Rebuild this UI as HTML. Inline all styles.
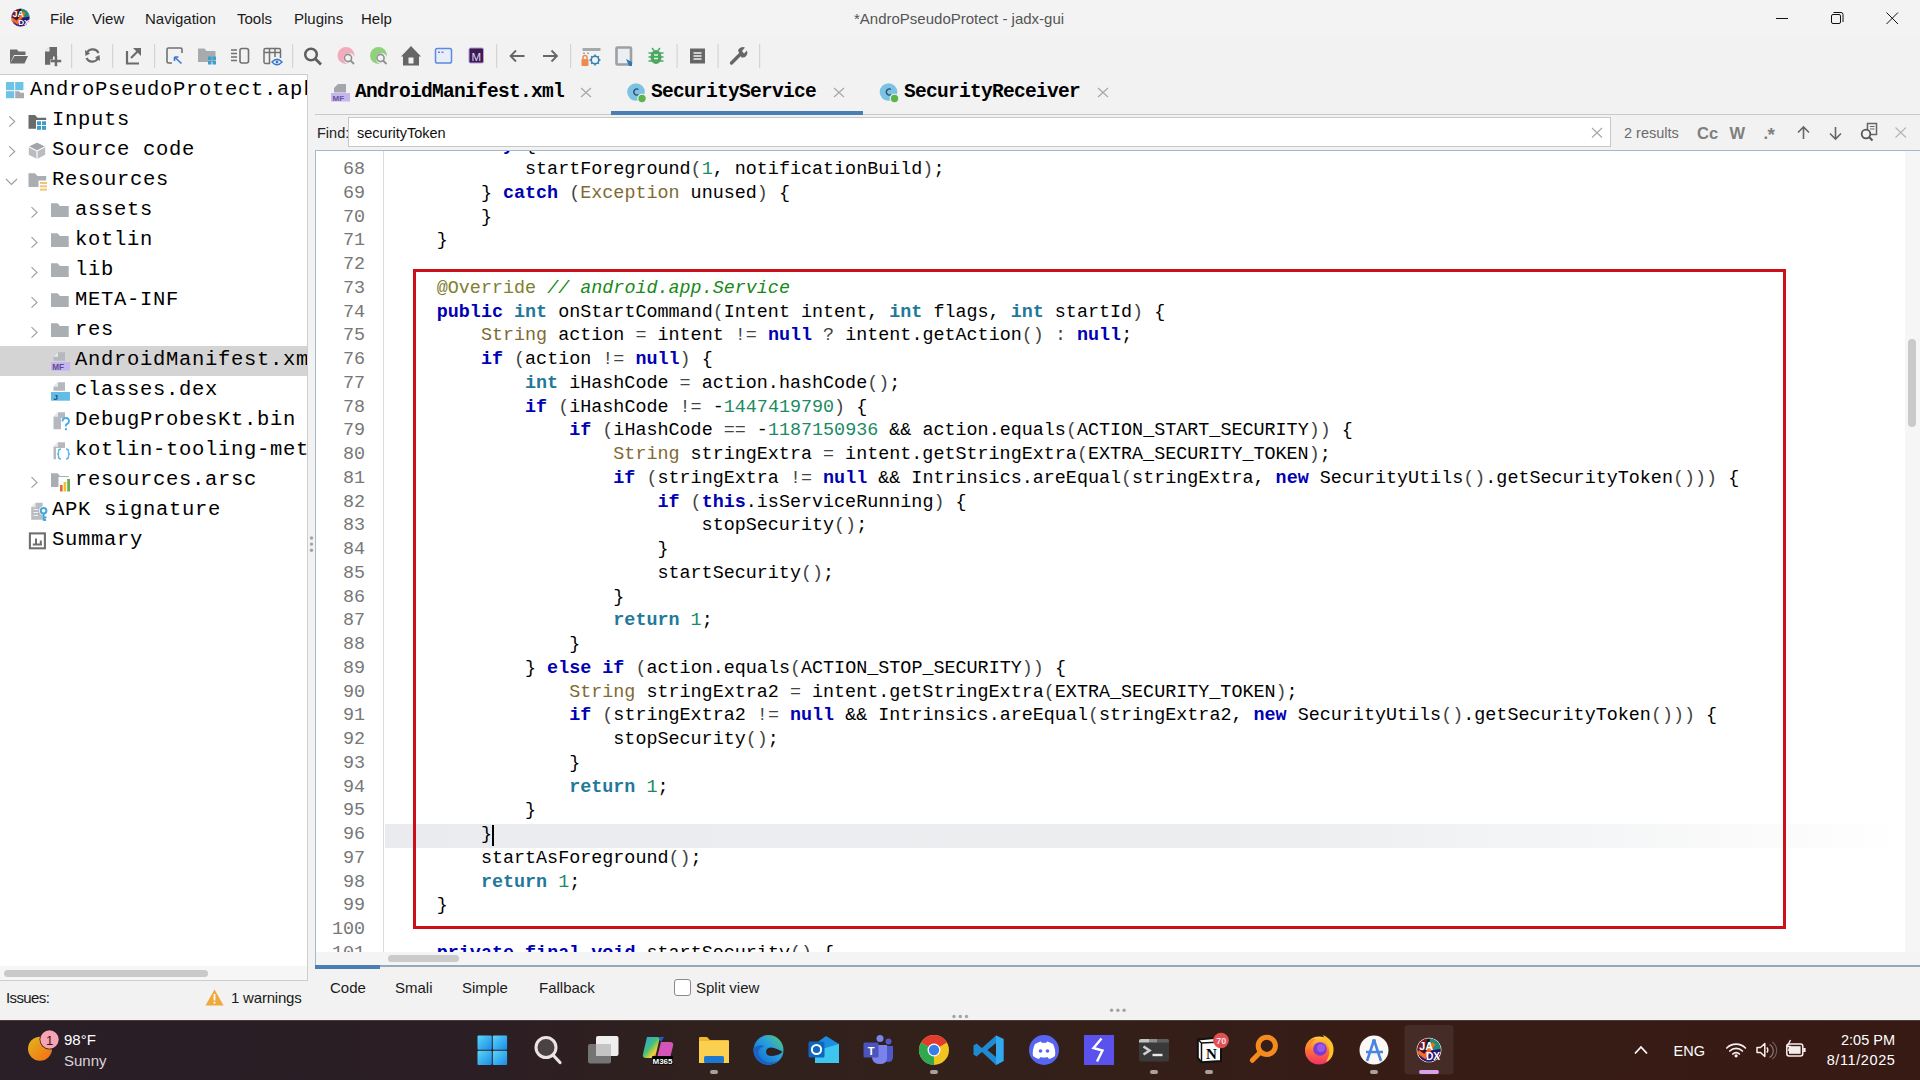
<!DOCTYPE html>
<html><head><meta charset="utf-8">
<style>
*{margin:0;padding:0;box-sizing:border-box}
html,body{width:1920px;height:1080px;overflow:hidden;background:#f2f2f2;font-family:"Liberation Sans",sans-serif;position:relative}
.abs{position:absolute}
svg{position:absolute;overflow:visible}
.ui{position:absolute;font-family:"Liberation Sans",sans-serif;font-size:15px;line-height:18px;color:#1a1a1a;white-space:nowrap}
#titlebar{left:0;top:0;width:1920px;height:36px;background:#f3f3f3}
#toolbar{left:0;top:36px;width:1920px;height:40px;background:#f2f2f2}
.sep{position:absolute;top:44px;width:1px;height:24px;background:#d6d6d6}
#tree{left:0;top:74px;width:308px;height:907px;background:#fff;border:1px solid #cdcdcd;border-left:none;overflow:hidden}
.trow{position:absolute;height:30px;font-family:"Liberation Mono",monospace;font-size:20.5px;letter-spacing:0.7px;line-height:30px;color:#000;white-space:pre}
.tab{position:absolute;font-family:"Liberation Mono",monospace;font-weight:bold;font-size:19.5px;letter-spacing:-0.7px;line-height:26px;color:#000;white-space:pre}
#code{left:315px;top:150px;width:1605px;height:816px;background:#fff;border-top:1px solid #a3b9c9;border-left:1px solid #a3b9c9;overflow:hidden}
.ln{position:absolute;left:0;width:49px;height:23.75px;line-height:23.75px;text-align:right;font-family:"Liberation Mono",monospace;font-size:18.407px;color:#777;white-space:pre}
.cl{position:absolute;left:76.6px;height:23.75px;line-height:23.75px;font-family:"Liberation Mono",monospace;font-size:18.407px;color:#000;white-space:pre}
.k{color:#0000b4;font-weight:bold}
.t{color:#21789a;font-weight:bold}
.c{color:#806a32}
.n{color:#1b8a64}
.a{color:#808030}
.cm{color:#178a17;font-style:italic}
.o{color:#444}
#taskbar{left:0;top:1020px;width:1920px;height:60px;background:linear-gradient(90deg,#2a1f27 0%,#2b1e25 23%,#30211d 37%,#33201a 52%,#371c16 70%,#381a14 100%);border-top:1px solid #4a3c3c}
.tw{position:absolute;font-family:"Liberation Sans",sans-serif;color:#fff;white-space:nowrap}
</style></head>
<body>
<!-- TITLE BAR -->
<div id="titlebar" class="abs">
  <svg style="left:10.5px;top:8px" width="19" height="19" viewBox="0 0 20 20">
    <defs><clipPath id="lc"><circle cx="10" cy="10" r="9.6"/></clipPath></defs>
    <g clip-path="url(#lc)">
      <rect x="0" y="0" width="20" height="20" fill="#14121c"/>
      <path d="M11 0 L20 0 L20 11 L9 11 Z" fill="#1f8c7a"/>
      <path d="M0 12.5 L20 9 L20 20 L0 20 Z" fill="#2a1478"/>
      <path d="M0 0 L9 0 L6 11 L0 11 Z" fill="#7a1826"/>
    </g>
    <path d="M0.8 11.5 L6.5 15.5 L14 4.5" stroke="#f26a24" stroke-width="3.2" fill="none"/>
    <text x="1.8" y="9.6" font-family="Liberation Sans" font-weight="bold" font-size="9" fill="#fff">JA</text>
    <text x="7.5" y="18.2" font-family="Liberation Sans" font-weight="bold" font-size="8.5" fill="#fff">DX</text>
    <circle cx="10" cy="10" r="9.6" fill="none" stroke="#fff" stroke-width="0.6" opacity="0.6"/>
  </svg>
  <div class="ui" style="left:50px;top:10px">File</div>
  <div class="ui" style="left:92px;top:10px">View</div>
  <div class="ui" style="left:145px;top:10px">Navigation</div>
  <div class="ui" style="left:237px;top:10px">Tools</div>
  <div class="ui" style="left:294px;top:10px">Plugins</div>
  <div class="ui" style="left:361px;top:10px">Help</div>
  <div class="ui" style="left:854px;top:10px;color:#555">*AndroPseudoProtect - jadx-gui</div>
  <svg style="left:1776px;top:12px" width="13" height="13" viewBox="0 0 13 13"><path d="M0 6.5 H12" stroke="#111" stroke-width="1"/></svg>
  <svg style="left:1831px;top:12px" width="13" height="13" viewBox="0 0 13 13"><rect x="0.5" y="2.5" width="9" height="9" rx="1.5" fill="none" stroke="#111" stroke-width="1"/><path d="M2.5 0.5 H10 A2 2 0 0 1 12 2.5 V10" fill="none" stroke="#111" stroke-width="1"/></svg>
  <svg style="left:1886px;top:12px" width="13" height="13" viewBox="0 0 13 13"><path d="M0.5 0.5 L12 12 M12 0.5 L0.5 12" stroke="#111" stroke-width="1"/></svg>
</div>
<!-- TOOLBAR -->
<div id="toolbar" class="abs"></div>
<svg style="left:0;top:0" width="800" height="76" viewBox="0 0 800 76">
  <g fill="#6b6b6b">
    <!-- open folder -->
    <path d="M10 49.5 H17 L18.5 51.5 H25.5 V55 H14 L10 63.5 Z"/>
    <path d="M14.5 56 H28 L24.5 63.5 H10 Z"/>
    <!-- add file -->
    <path d="M49.5 47 H57 V56.5 H53 V59.5 H50.3 V64.8 H45 V51.5 Z"/>
    <path d="M45 51.5 L49.5 47 V51.5 Z" fill="#f2f2f2"/>
    <rect x="54.7" y="55.8" width="2.5" height="10.4"/>
    <rect x="50.7" y="59.8" width="10.5" height="2.5"/>
  </g>
  <rect x="71" y="44" width="1.2" height="24" fill="#d4d4d4"/>
  <rect x="112" y="44" width="1.2" height="24" fill="#d4d4d4"/>
  <rect x="154" y="44" width="1.2" height="24" fill="#d4d4d4"/>
  <rect x="292" y="44" width="1.2" height="24" fill="#d4d4d4"/>
  <rect x="496" y="44" width="1.2" height="24" fill="#d4d4d4"/>
  <rect x="570" y="44" width="1.2" height="24" fill="#d4d4d4"/>
  <rect x="676.5" y="44" width="1.2" height="24" fill="#d4d4d4"/>
  <rect x="717.5" y="44" width="1.2" height="24" fill="#d4d4d4"/>
  <rect x="759" y="44" width="1.2" height="24" fill="#d4d4d4"/>
  <!-- refresh -->
  <g fill="none" stroke="#6b6b6b" stroke-width="2.2">
    <path d="M98.5 53 A6.5 6.5 0 0 0 86.5 54"/>
    <path d="M86.5 58 A6.5 6.5 0 0 0 98.5 57"/>
  </g>
  <path d="M85 50 L85.5 56 L90 53.5 Z" fill="#6b6b6b"/>
  <path d="M100 61 L99.5 55 L95 57.5 Z" fill="#6b6b6b"/>
  <!-- export -->
  <path d="M127 51 V63.5 H139" fill="none" stroke="#6b6b6b" stroke-width="2.2"/>
  <path d="M131 58 L138 51" stroke="#6b6b6b" stroke-width="2.2"/>
  <path d="M133 48 H141 V56 Z" fill="#6b6b6b"/>
  <!-- select -->
  <path d="M172 63 H168.5 A1.5 1.5 0 0 1 167 61.5 V49.5 A1.5 1.5 0 0 1 168.5 48 H180.5 A1.5 1.5 0 0 1 182 49.5 V53" fill="none" stroke="#707070" stroke-width="1.6"/>
  <path d="M174.5 57 L181.5 63.5 M174.5 57 H178.5 M174.5 57 V61" fill="none" stroke="#3b78d0" stroke-width="1.6"/>
  <!-- folder grid -->
  <path d="M198 48.5 H204.5 L206.5 51 H215.5 V62 H198 Z" fill="#a7abae"/>
  <g fill="#3aa0cf">
    <rect x="208" y="56.5" width="3.5" height="3.5"/><rect x="212.5" y="56.5" width="3.5" height="3.5"/>
    <rect x="208" y="61" width="3.5" height="3.5"/><rect x="212.5" y="61" width="3.5" height="3.5"/>
  </g>
  <!-- list box -->
  <g stroke="#707070" stroke-width="1.6" fill="none">
    <path d="M231 50 H237 M231 53.5 H237 M231 57 H237 M231 60.5 H237"/>
    <rect x="240" y="48.5" width="8.5" height="14.5" rx="2"/>
  </g>
  <!-- table eye -->
  <g stroke="#707070" stroke-width="1.5" fill="none">
    <path d="M270 63.5 H265.5 A1.5 1.5 0 0 1 264 62 V50 A1.5 1.5 0 0 1 265.5 48.5 H279 A1.5 1.5 0 0 1 280.5 50 V58"/>
    <path d="M264 52.5 H280.5 M269.5 48.5 V63.5 M275 48.5 V57"/>
  </g>
  <path d="M272 62 Q277 56.5 282 62 Q277 67.5 272 62 Z" fill="#eef2fa" stroke="#3b78d0" stroke-width="1.4"/>
  <circle cx="277" cy="62" r="1.4" fill="#3b78d0"/>
  <!-- search -->
  <circle cx="311" cy="54.5" r="5.8" fill="none" stroke="#5e5e5e" stroke-width="2.5"/>
  <path d="M315.5 59 L321 64.5" stroke="#5e5e5e" stroke-width="2.8"/>
  <!-- pink search -->
  <circle cx="346" cy="55.5" r="8.5" fill="#f2aabc"/>
  <circle cx="349" cy="58.5" r="5.5" fill="#f2f2f2"/>
  <circle cx="348" cy="58" r="3.6" fill="none" stroke="#8f8f8f" stroke-width="1.6"/>
  <path d="M350.5 60.5 L354 64" stroke="#8f8f8f" stroke-width="1.8"/>
  <!-- green search -->
  <circle cx="378.5" cy="55.5" r="8.5" fill="#90d27c"/>
  <circle cx="381.5" cy="58.5" r="5.5" fill="#f2f2f2"/>
  <circle cx="380.5" cy="58" r="3.6" fill="none" stroke="#8f8f8f" stroke-width="1.6"/>
  <path d="M383 60.5 L386.5 64" stroke="#8f8f8f" stroke-width="1.8"/>
  <!-- home -->
  <path d="M411 46 L421 56.5 H419 V65.5 H403 V56.5 H401 Z" fill="#666"/>
  <rect x="408.5" y="57.5" width="5" height="6" fill="#f2f2f2"/>
  <!-- window -->
  <rect x="435.5" y="48.5" width="16" height="14.5" rx="1.8" fill="#e9edf9" stroke="#5a8be0" stroke-width="1.5"/>
  <rect x="438" y="51.5" width="2" height="1.5" fill="#5a8be0"/><rect x="441.5" y="51.5" width="2" height="1.5" fill="#5a8be0"/>
  <!-- M -->
  <rect x="469" y="48" width="14.5" height="15" rx="1.5" fill="#3b1d52" stroke="#b99ae0" stroke-width="1"/>
  <text x="476.2" y="60.5" text-anchor="middle" font-family="Liberation Sans" font-size="11.5" fill="#e0d0f0">M</text>
  <!-- arrows -->
  <g stroke="#666" stroke-width="1.8" fill="none">
    <path d="M524.5 56 H510.5 M516 50.5 L510.5 56 L516 61.5"/>
    <path d="M543 56 H557 M551.5 50.5 L557 56 L551.5 61.5"/>
  </g>
  <!-- lock gear -->
  <rect x="582.5" y="48" width="18" height="3" fill="#a5a9ac"/>
  <path d="M583 52.5 H585 V54 H583 Z M587 52.5 H589 V54 H587 Z" fill="#a5a9ac"/>
  <rect x="581.5" y="59" width="7" height="7" rx="1" fill="#ef8a4e"/>
  <path d="M583 59.5 V57.5 A2 2 0 0 1 587 57.5 V59.5" fill="none" stroke="#ef8a4e" stroke-width="1.5"/>
  <circle cx="595" cy="60" r="3.8" fill="#e9f4fb" stroke="#3a7fb0" stroke-width="1.6"/>
  <g stroke="#3a7fb0" stroke-width="1.6"><path d="M595 54.5 V56 M595 64 V65.5 M589.5 60 H591 M599 60 H600.5 M591.2 56.2 L592.2 57.2 M597.8 62.8 L598.8 63.8 M598.8 56.2 L597.8 57.2 M592.2 62.8 L591.2 63.8"/></g>
  <!-- device -->
  <rect x="616.5" y="47.5" width="14.5" height="17" rx="1" fill="#eceff2" stroke="#9aa0a4" stroke-width="2.6"/>
  <path d="M626 59 L632 62 L632 66 L629 66 Z" fill="#2e7ab3"/>
  <!-- bug -->
  <g fill="#4aa862">
    <ellipse cx="656" cy="57" rx="5.5" ry="7"/>
    <path d="M652 48 L654 50.5 M660 48 L658 50.5" stroke="#4aa862" stroke-width="1.5"/>
    <path d="M648.5 53 H663.5 M648.5 57 H663.5 M648.5 61 H663.5" stroke="#4aa862" stroke-width="1.6"/>
  </g>
  <path d="M654 55 H658 M654 58.5 H658" stroke="#e8f4ec" stroke-width="1.3"/>
  <!-- doc -->
  <rect x="690" y="48.5" width="15" height="15" fill="#666"/>
  <path d="M693.5 53 H701.5 M693.5 56 H701.5 M693.5 59 H701.5" stroke="#f2f2f2" stroke-width="1.3"/>
  <!-- wrench -->
  <path d="M731.5 63 L740.5 54" stroke="#666" stroke-width="3.4" stroke-linecap="round"/>
  <path d="M738 50.5 A5 5 0 0 1 745 47.5 L742 51 L744 53.5 L747 50.5 A5 5 0 0 1 741.5 57.5 Z" fill="#666"/>
</svg>
<!-- TREE -->
<div id="tree" class="abs">
  <div class="abs" style="left:0;top:271px;width:307px;height:30px;background:#d4d4d4"></div>
  <div class="trow" style="left:30px;top:-0.5px">AndroPseudoProtect.apk</div>
  <div class="trow" style="left:52px;top:29.5px">Inputs</div>
  <div class="trow" style="left:52px;top:59.5px">Source code</div>
  <div class="trow" style="left:52px;top:89.5px">Resources</div>
  <div class="trow" style="left:75px;top:119.5px">assets</div>
  <div class="trow" style="left:75px;top:149.5px">kotlin</div>
  <div class="trow" style="left:75px;top:179.5px">lib</div>
  <div class="trow" style="left:75px;top:209.5px">META-INF</div>
  <div class="trow" style="left:75px;top:239.5px">res</div>
  <div class="trow" style="left:75px;top:269.5px">AndroidManifest.xml</div>
  <div class="trow" style="left:75px;top:299.5px">classes.dex</div>
  <div class="trow" style="left:75px;top:329.5px">DebugProbesKt.bin</div>
  <div class="trow" style="left:75px;top:359.5px">kotlin-tooling-metadata.json</div>
  <div class="trow" style="left:75px;top:389.5px">resources.arsc</div>
  <div class="trow" style="left:52px;top:419.5px">APK signature</div>
  <div class="trow" style="left:52px;top:449.5px">Summary</div>
  <!-- scrollbar -->
  <div class="abs" style="left:0;top:891px;width:307px;height:15px;background:#f6f6f6"></div>
  <div class="abs" style="left:4px;top:895px;width:204px;height:7px;border-radius:4px;background:#c9c9c9"></div>
</div>
<svg style="left:0;top:0" width="310" height="560" viewBox="0 0 310 560">
  <g fill="#6dc3e3"><rect x="6" y="82" width="8.2" height="8.2"/><rect x="15.2" y="82" width="8.2" height="8.2"/><rect x="6" y="91.2" width="8.2" height="7"/></g>
  <path d="M15.2 91.2 H19 L20.5 92.8 H24 V98.2 H15.2 Z" fill="#a7abb0"/>
  <path d="M9.2 116.3 L14.7 121.5 L9.2 126.7" fill="none" stroke="#9d9d9d" stroke-width="1.15"/>
  <path d="M9.2 146.3 L14.7 151.5 L9.2 156.70000000000002" fill="none" stroke="#9d9d9d" stroke-width="1.15"/>
  <path d="M6 179 L11.5 184.5 L17 179" fill="none" stroke="#9d9d9d" stroke-width="1.15"/>
  <path d="M31.5 207.2 L37.0 212.39999999999998 L31.5 217.6" fill="none" stroke="#9d9d9d" stroke-width="1.15"/>
  <path d="M31.5 237.2 L37.0 242.39999999999998 L31.5 247.6" fill="none" stroke="#9d9d9d" stroke-width="1.15"/>
  <path d="M31.5 267.2 L37.0 272.4 L31.5 277.59999999999997" fill="none" stroke="#9d9d9d" stroke-width="1.15"/>
  <path d="M31.5 297.2 L37.0 302.4 L31.5 307.59999999999997" fill="none" stroke="#9d9d9d" stroke-width="1.15"/>
  <path d="M31.5 327.2 L37.0 332.4 L31.5 337.59999999999997" fill="none" stroke="#9d9d9d" stroke-width="1.15"/>
  <path d="M31.5 477.2 L37.0 482.4 L31.5 487.59999999999997" fill="none" stroke="#9d9d9d" stroke-width="1.15"/>
  <path d="M28.5 115 H35.0 L37.5 117.8 H46.2 V128.7 H28.5 Z" fill="#6b6b6b"/>
  <rect x="36" y="120" width="11" height="11" fill="#fff"/>
  <g fill="#3d9cc9"><rect x="37" y="121.3" width="4" height="3.8"/><rect x="42" y="121.3" width="4" height="3.8"/><rect x="37" y="126" width="4" height="3.8"/><rect x="42" y="126" width="4" height="3.8"/></g>
  <path d="M37 142.7 L45.2 146.8 V154.8 L37 158.9 L28.8 154.8 V146.8 Z" fill="#b9bdc1"/>
  <path d="M28.8 146.8 L37 142.7 L45.2 146.8 L37 150.9 Z" fill="#a2a6aa"/>
  <path d="M28.8 146.8 L37 150.9 L45.2 146.8 M37 150.9 V158.9" fill="none" stroke="#fff" stroke-width="1.1"/>
  <path d="M28.5 173.3 H35.0 L37.5 176.10000000000002 H46.2 V187.0 H28.5 Z" fill="#a9aeb3"/>
  <rect x="38.5" y="180.5" width="10" height="12" fill="#fff"/>
  <g fill="#efc47c"><rect x="40" y="182" width="7" height="2"/><rect x="40" y="185.3" width="7" height="2"/><rect x="40" y="188.6" width="7" height="2"/></g>
  <path d="M51 203.2 H57.5 L60 206.0 H68.7 V216.89999999999998 H51 Z" fill="#a9aeb3"/>
  <path d="M51 233.2 H57.5 L60 236.0 H68.7 V246.89999999999998 H51 Z" fill="#a9aeb3"/>
  <path d="M51 263.2 H57.5 L60 266.0 H68.7 V276.9 H51 Z" fill="#a9aeb3"/>
  <path d="M51 293.2 H57.5 L60 296.0 H68.7 V306.9 H51 Z" fill="#a9aeb3"/>
  <path d="M51 323.2 H57.5 L60 326.0 H68.7 V336.9 H51 Z" fill="#a9aeb3"/>
  <path d="M51 473.2 H57.5 L60 476.0 H68.7 V486.9 H51 Z" fill="#a9aeb3"/>
  <rect x="58.5" y="477" width="12.5" height="15" fill="#fff"/>
  <rect x="60" y="485" width="2.6" height="6.5" fill="#e5692f"/><rect x="63.6" y="482" width="2.6" height="9.5" fill="#efbf3a"/><rect x="67.2" y="479" width="2.8" height="12.5" fill="#6cac52"/>
  <path d="M58.0 352.2 H65.0 V360.8 H53.5 V356.7 Z" fill="#b5b9bd"/><path d="M53.5 356.7 L58.0 352.2 V356.7 Z" fill="#e6e8ea"/>
  <rect x="51" y="362" width="19" height="8.7" fill="#c7b5ef"/>
  <text x="52.3" y="369.6" font-family="Liberation Sans" font-weight="bold" font-size="8.2" fill="#5b4b94">MF</text>
  <path d="M58.0 382.2 H65.0 V390.8 H53.5 V386.7 Z" fill="#b5b9bd"/><path d="M53.5 386.7 L58.0 382.2 V386.7 Z" fill="#e6e8ea"/>
  <rect x="51" y="392" width="19" height="8.7" fill="#62bde4"/>
  <text x="53.5" y="399.6" font-family="Liberation Sans" font-weight="bold" font-size="8" fill="#1e4a72">J</text>
  <path d="M58.0 412.2 H65.0 V429.2 H53.5 V416.7 Z" fill="#b5b9bd"/><path d="M53.5 416.7 L58.0 412.2 V416.7 Z" fill="#e6e8ea"/>
  <rect x="61" y="418" width="9" height="13" fill="#fff"/>
  <path d="M62.5 421.5 Q62.5 418 65.8 418 Q69 418 69 421 Q69 423.5 66 424.5 V426.5" fill="none" stroke="#4aaedf" stroke-width="1.8"/><rect x="65" y="428.2" width="2" height="2" fill="#4aaedf"/>
  <path d="M58.0 442.2 H65.0 V459.2 H53.5 V446.7 Z" fill="#b5b9bd"/><path d="M53.5 446.7 L58.0 442.2 V446.7 Z" fill="#e6e8ea"/>
  <rect x="56" y="448" width="15" height="12" fill="#fff"/>
  <path d="M61 449 Q58.5 449 58.5 451.5 V452.8 Q58.5 454 57 454 Q58.5 454 58.5 455.3 V456.5 Q58.5 459 61 459 M66 449 Q68.5 449 68.5 451.5 V452.8 Q68.5 454 70 454 Q68.5 454 68.5 455.3 V456.5 Q68.5 459 66 459" fill="none" stroke="#5bb6e6" stroke-width="1.4"/>
  <path d="M35.7 502.7 H42.7 V519.7 H31.2 V507.2 Z" fill="#b9bdc1"/><path d="M31.2 507.2 L35.7 502.7 V507.2 Z" fill="#e6e8ea"/>
  <path d="M33.5 509.5 H38 M33.5 512.5 H38 M33.5 515.5 H38" stroke="#f0f0f0" stroke-width="1.2"/>
  <circle cx="43.6" cy="510.7" r="4.5" fill="#fff"/>
  <circle cx="43.6" cy="510.7" r="2.8" fill="none" stroke="#46a6dc" stroke-width="2"/>
  <path d="M43.6 513.5 V520.5 M43.6 517.5 H46.5 M43.6 520 H46" stroke="#46a6dc" stroke-width="2"/>
  <rect x="29.9" y="533.4" width="15" height="14.9" fill="none" stroke="#6f6f6f" stroke-width="2.1"/>
  <path d="M32.8 544.6 H42 M36 538.5 V544.6 M40.8 540.5 V544.6" fill="none" stroke="#6f6f6f" stroke-width="2"/>
  </svg>
<!-- TABS -->
<div class="abs" style="left:315px;top:114px;width:1605px;height:1px;background:#c9c9c9"></div>
<div class="abs" style="left:611px;top:111px;width:252px;height:3.5px;background:#4a7fb5"></div>
<svg style="left:0;top:0" width="1120" height="120" viewBox="0 0 1120 120">
  <path d="M334 88 L338 84 H346 V92.5 H334 Z" fill="#a3a7ab"/>
  <rect x="331" y="93" width="19" height="8.5" fill="#c6b6ee"/>
  <text x="332.5" y="100.8" font-family="Liberation Sans" font-weight="bold" font-size="8" fill="#6552a0">MF</text>
  <g stroke="#a6a6a6" stroke-width="1.1"><path d="M581 88 L591 97 M591 88 L581 97"/><path d="M834 88 L844 97 M844 88 L834 97"/><path d="M1098 88 L1108 97 M1108 88 L1098 97"/></g>
  <circle cx="636" cy="92" r="8.8" fill="#7cc3e3"/>
  <path d="M638.5 89.5 A3 3 0 1 0 638.5 94.5" fill="none" stroke="#2a4d6a" stroke-width="1.3"/>
  <circle cx="642" cy="98.5" r="4.8" fill="#f2f2f2"/><circle cx="642" cy="98.5" r="3.7" fill="#5bb548"/>
  <circle cx="888.5" cy="92" r="8.8" fill="#7cc3e3"/>
  <path d="M891 89.5 A3 3 0 1 0 891 94.5" fill="none" stroke="#2a4d6a" stroke-width="1.3"/>
  <circle cx="894.5" cy="98.5" r="4.8" fill="#f2f2f2"/><circle cx="894.5" cy="98.5" r="3.7" fill="#5bb548"/>
</svg>
<div class="tab" style="left:355px;top:79px">AndroidManifest.xml</div>
<div class="tab" style="left:651px;top:79px">SecurityService</div>
<div class="tab" style="left:904px;top:79px">SecurityReceiver</div>

<!-- FIND BAR -->
<div class="ui" style="left:317px;top:124px;font-size:14.5px;color:#222">Find:</div>
<div class="abs" style="left:348px;top:117px;width:1263px;height:30px;background:#fff;border:1px solid #c8c8c8"></div>
<div class="ui" style="left:357px;top:124px;font-size:14.5px;color:#111">securityToken</div>
<svg style="left:0;top:0" width="1920" height="150" viewBox="0 0 1920 150">
  <path d="M1592 128 L1602 137.5 M1602 128 L1592 137.5" stroke="#a6a6a6" stroke-width="1.1"/>
  <text x="1697" y="138.5" font-family="Liberation Sans" font-weight="bold" font-size="16.5" fill="#7f7f7f">Cc</text>
  <text x="1729.5" y="138.5" font-family="Liberation Sans" font-weight="bold" font-size="16.5" fill="#7f7f7f">W</text>
  <text x="1763.5" y="139" font-family="Liberation Sans" font-weight="bold" font-size="16.5" fill="#7f7f7f">.</text><text x="1767.5" y="140.5" font-family="Liberation Sans" font-weight="bold" font-size="19" fill="#7f7f7f">*</text>
  <g stroke="#666" stroke-width="1.6" fill="none">
    <path d="M1803.5 127 V139 M1798 132.5 L1803.5 127 L1809 132.5"/>
    <path d="M1835.5 127 V139 M1830 133.5 L1835.5 139 L1841 133.5"/>
  </g>
  <rect x="1867.5" y="123.5" width="9" height="11" fill="none" stroke="#666" stroke-width="1.5"/>
  <path d="M1870 126.5 H1874.5 M1870 129 H1874.5" stroke="#666" stroke-width="1.2"/>
  <circle cx="1866" cy="134" r="4.3" fill="#f2f2f2" stroke="#555" stroke-width="1.8"/>
  <path d="M1869 137 L1872.5 140.5" stroke="#555" stroke-width="2"/>
  <path d="M1895.5 127.5 L1906 137.5 M1906 127.5 L1895.5 137.5" stroke="#b4b4b4" stroke-width="1.1"/>
</svg>
<div class="ui" style="left:1624px;top:124px;font-size:14.5px;color:#6b6b6b">2 results</div>

<!-- CODE -->
<div id="code" class="abs">
  <div class="abs" style="left:67px;top:0;width:1px;height:801px;background:#dcdcdc"></div>
  <div class="abs" style="left:69px;top:673px;width:1520px;height:24px;background:linear-gradient(90deg,#e9ebee 0%,#eceef0 60%,#f5f6f7 80%,#fbfbfb 92%,#fff 100%)"></div>
<div class="cl" style="top:-16.70px">        <span class="k">try</span> {</div>
<div class="ln" style="top:7.05px">68</div>
<div class="cl" style="top:7.05px">            startForeground<span class="o">(</span><span class="n">1</span>, notificationBuild<span class="o">)</span>;</div>
<div class="ln" style="top:30.80px">69</div>
<div class="cl" style="top:30.80px">        } <span class="k">catch</span> <span class="o">(</span><span class="c">Exception</span> unused<span class="o">)</span> {</div>
<div class="ln" style="top:54.55px">70</div>
<div class="cl" style="top:54.55px">        }</div>
<div class="ln" style="top:78.30px">71</div>
<div class="cl" style="top:78.30px">    }</div>
<div class="ln" style="top:102.05px">72</div>
<div class="cl" style="top:102.05px"></div>
<div class="ln" style="top:125.80px">73</div>
<div class="cl" style="top:125.80px">    <span class="a">@Override</span> <span class="cm">// android.app.Service</span></div>
<div class="ln" style="top:149.55px">74</div>
<div class="cl" style="top:149.55px">    <span class="k">public</span> <span class="t">int</span> onStartCommand<span class="o">(</span>Intent intent, <span class="t">int</span> flags, <span class="t">int</span> startId<span class="o">)</span> {</div>
<div class="ln" style="top:173.30px">75</div>
<div class="cl" style="top:173.30px">        <span class="c">String</span> action <span class="o">=</span> intent <span class="o">!=</span> <span class="k">null</span> <span class="o">?</span> intent.getAction<span class="o">(</span><span class="o">)</span> <span class="o">:</span> <span class="k">null</span>;</div>
<div class="ln" style="top:197.05px">76</div>
<div class="cl" style="top:197.05px">        <span class="k">if</span> <span class="o">(</span>action <span class="o">!=</span> <span class="k">null</span><span class="o">)</span> {</div>
<div class="ln" style="top:220.80px">77</div>
<div class="cl" style="top:220.80px">            <span class="t">int</span> iHashCode <span class="o">=</span> action.hashCode<span class="o">(</span><span class="o">)</span>;</div>
<div class="ln" style="top:244.55px">78</div>
<div class="cl" style="top:244.55px">            <span class="k">if</span> <span class="o">(</span>iHashCode <span class="o">!=</span> -<span class="n">1447419790</span><span class="o">)</span> {</div>
<div class="ln" style="top:268.30px">79</div>
<div class="cl" style="top:268.30px">                <span class="k">if</span> <span class="o">(</span>iHashCode <span class="o">==</span> -<span class="n">1187150936</span> &amp;&amp; action.equals<span class="o">(</span>ACTION_START_SECURITY<span class="o">)</span><span class="o">)</span> {</div>
<div class="ln" style="top:292.05px">80</div>
<div class="cl" style="top:292.05px">                    <span class="c">String</span> stringExtra <span class="o">=</span> intent.getStringExtra<span class="o">(</span>EXTRA_SECURITY_TOKEN<span class="o">)</span>;</div>
<div class="ln" style="top:315.80px">81</div>
<div class="cl" style="top:315.80px">                    <span class="k">if</span> <span class="o">(</span>stringExtra <span class="o">!=</span> <span class="k">null</span> &amp;&amp; Intrinsics.areEqual<span class="o">(</span>stringExtra, <span class="k">new</span> SecurityUtils<span class="o">(</span><span class="o">)</span>.getSecurityToken<span class="o">(</span><span class="o">)</span><span class="o">)</span><span class="o">)</span> {</div>
<div class="ln" style="top:339.55px">82</div>
<div class="cl" style="top:339.55px">                        <span class="k">if</span> <span class="o">(</span><span class="k">this</span>.isServiceRunning<span class="o">)</span> {</div>
<div class="ln" style="top:363.30px">83</div>
<div class="cl" style="top:363.30px">                            stopSecurity<span class="o">(</span><span class="o">)</span>;</div>
<div class="ln" style="top:387.05px">84</div>
<div class="cl" style="top:387.05px">                        }</div>
<div class="ln" style="top:410.80px">85</div>
<div class="cl" style="top:410.80px">                        startSecurity<span class="o">(</span><span class="o">)</span>;</div>
<div class="ln" style="top:434.55px">86</div>
<div class="cl" style="top:434.55px">                    }</div>
<div class="ln" style="top:458.30px">87</div>
<div class="cl" style="top:458.30px">                    <span class="t">return</span> <span class="n">1</span>;</div>
<div class="ln" style="top:482.05px">88</div>
<div class="cl" style="top:482.05px">                }</div>
<div class="ln" style="top:505.80px">89</div>
<div class="cl" style="top:505.80px">            } <span class="k">else</span> <span class="k">if</span> <span class="o">(</span>action.equals<span class="o">(</span>ACTION_STOP_SECURITY<span class="o">)</span><span class="o">)</span> {</div>
<div class="ln" style="top:529.55px">90</div>
<div class="cl" style="top:529.55px">                <span class="c">String</span> stringExtra2 <span class="o">=</span> intent.getStringExtra<span class="o">(</span>EXTRA_SECURITY_TOKEN<span class="o">)</span>;</div>
<div class="ln" style="top:553.30px">91</div>
<div class="cl" style="top:553.30px">                <span class="k">if</span> <span class="o">(</span>stringExtra2 <span class="o">!=</span> <span class="k">null</span> &amp;&amp; Intrinsics.areEqual<span class="o">(</span>stringExtra2, <span class="k">new</span> SecurityUtils<span class="o">(</span><span class="o">)</span>.getSecurityToken<span class="o">(</span><span class="o">)</span><span class="o">)</span><span class="o">)</span> {</div>
<div class="ln" style="top:577.05px">92</div>
<div class="cl" style="top:577.05px">                    stopSecurity<span class="o">(</span><span class="o">)</span>;</div>
<div class="ln" style="top:600.80px">93</div>
<div class="cl" style="top:600.80px">                }</div>
<div class="ln" style="top:624.55px">94</div>
<div class="cl" style="top:624.55px">                <span class="t">return</span> <span class="n">1</span>;</div>
<div class="ln" style="top:648.30px">95</div>
<div class="cl" style="top:648.30px">            }</div>
<div class="ln" style="top:672.05px">96</div>
<div class="cl" style="top:672.05px">        }</div>
<div class="ln" style="top:695.80px">97</div>
<div class="cl" style="top:695.80px">        startAsForeground<span class="o">(</span><span class="o">)</span>;</div>
<div class="ln" style="top:719.55px">98</div>
<div class="cl" style="top:719.55px">        <span class="t">return</span> <span class="n">1</span>;</div>
<div class="ln" style="top:743.30px">99</div>
<div class="cl" style="top:743.30px">    }</div>
<div class="ln" style="top:767.05px">100</div>
<div class="cl" style="top:767.05px"></div>
<div class="ln" style="top:790.80px">101</div>
<div class="cl" style="top:790.80px">    <span class="k">private</span> <span class="k">final</span> <span class="k">void</span> startSecurity<span class="o">(</span><span class="o">)</span> {</div>
  <div class="abs" style="left:96.5px;top:117.5px;width:1373px;height:660.5px;border:3px solid #cc0f18"></div>
  <div class="abs" style="left:176px;top:674px;width:1.5px;height:21px;background:#000"></div>
  <!-- v scrollbar -->
  <div class="abs" style="left:1589px;top:0;width:16px;height:801px;background:#f6f6f6"></div>
  <div class="abs" style="left:1592px;top:188px;width:8px;height:88px;border-radius:4px;background:#cacaca"></div>
  <!-- h scrollbar -->
  <div class="abs" style="left:0;top:801px;width:1605px;height:14px;background:#f4f4f4"></div>
  <div class="abs" style="left:72px;top:804px;width:71px;height:7px;border-radius:4px;background:#cacaca"></div>
</div>
<div class="abs" style="left:315px;top:965px;width:1605px;height:1.5px;background:#97a9b7"></div>
<div class="abs" style="left:315px;top:965px;width:65px;height:4px;background:#4a7fb5"></div>

<!-- BOTTOM TABS -->
<div class="ui" style="left:330px;top:979px;font-size:15px">Code</div>
<div class="ui" style="left:395px;top:979px;font-size:15px">Smali</div>
<div class="ui" style="left:462px;top:979px;font-size:15px">Simple</div>
<div class="ui" style="left:539px;top:979px;font-size:15px">Fallback</div>
<div class="abs" style="left:674px;top:979px;width:17px;height:17px;border:1px solid #8a8a8a;border-radius:3px;background:#fff"></div>
<div class="ui" style="left:696px;top:979px;font-size:15px">Split view</div>
<div class="ui" style="left:6px;top:989px;font-size:15px;letter-spacing:-0.6px">Issues:</div>
<svg style="left:205px;top:989px" width="19" height="17" viewBox="0 0 19 17"><path d="M9.5 0.5 L18.5 16.5 H0.5 Z" fill="#f0a83a"/><rect x="8.6" y="5" width="1.8" height="6.5" fill="#fff"/><rect x="8.6" y="12.8" width="1.8" height="1.8" fill="#fff"/></svg>
<div class="ui" style="left:231px;top:989px;font-size:15px;letter-spacing:-0.2px">1 warnings</div>
<svg style="left:0;top:0" width="1920" height="1020" viewBox="0 0 1920 1020">
  <g fill="#a3a3a3"><circle cx="311.5" cy="538" r="1.7"/><circle cx="311.5" cy="544.1" r="1.7"/><circle cx="311.5" cy="550.2" r="1.7"/>
  <circle cx="954" cy="1016.5" r="1.7"/><circle cx="960.3" cy="1016.5" r="1.7"/><circle cx="966.5" cy="1016.5" r="1.7"/>
  <circle cx="1111.6" cy="1010.2" r="1.7"/><circle cx="1117.9" cy="1010.2" r="1.7"/><circle cx="1124.1" cy="1010.2" r="1.7"/></g>
</svg>
<!-- TASKBAR -->
<div id="taskbar" class="abs"></div>
<svg style="left:0;top:1020px" width="1920" height="60" viewBox="0 1020 1920 60">
  <defs>
    <linearGradient id="sun" x1="0" y1="0" x2="1" y2="1"><stop offset="0" stop-color="#e2b81e"/><stop offset="1" stop-color="#f56a12"/></linearGradient>
    <linearGradient id="win" x1="0" y1="0" x2="1" y2="1"><stop offset="0" stop-color="#5cd6f8"/><stop offset="1" stop-color="#1a8ae8"/></linearGradient>
    <linearGradient id="m365" x1="0" y1="0" x2="1" y2="1"><stop offset="0" stop-color="#2a9cf0"/><stop offset="0.45" stop-color="#45c07a"/><stop offset="0.7" stop-color="#f0d030"/><stop offset="1" stop-color="#e04aa0"/></linearGradient>
    <linearGradient id="edge" x1="0" y1="1" x2="1" y2="0"><stop offset="0" stop-color="#1060c8"/><stop offset="0.6" stop-color="#28a0e0"/><stop offset="1" stop-color="#5ad060"/></linearGradient>
    <linearGradient id="ff" x1="0" y1="0" x2="0" y2="1"><stop offset="0" stop-color="#ffd040"/><stop offset="0.5" stop-color="#ff7030"/><stop offset="1" stop-color="#f03070"/></linearGradient>
  </defs>
  <!-- weather -->
  <circle cx="40" cy="1048.8" r="12" fill="url(#sun)"/>
  <circle cx="49.5" cy="1039.5" r="10" fill="#2a1d26"/>
  <circle cx="49.5" cy="1039.5" r="9.2" fill="#f6a3b4"/>
  <text x="49.5" y="1044.5" text-anchor="middle" font-family="Liberation Sans" font-size="13" fill="#3a1018">1</text>
  <text x="64" y="1045" font-family="Liberation Sans" font-size="15" fill="#fff">98°F</text>
  <text x="64" y="1065.5" font-family="Liberation Sans" font-size="15" fill="#dcd4dc">Sunny</text>
  <!-- windows -->
  <g fill="url(#win)">
    <rect x="477.5" y="1035.5" width="14.3" height="14.3" rx="1"/><rect x="492.8" y="1035.5" width="14.3" height="14.3" rx="1"/>
    <rect x="477.5" y="1050.8" width="14.3" height="14.3" rx="1"/><rect x="492.8" y="1050.8" width="14.3" height="14.3" rx="1"/>
  </g>
  <!-- search -->
  <circle cx="546" cy="1047.5" r="10" fill="#4b4244" stroke="#ece4e4" stroke-width="3"/>
  <path d="M553 1055 L560 1062.5" stroke="#ece4e4" stroke-width="3.2" stroke-linecap="round"/>
  <!-- task view -->
  <rect x="588" y="1044" width="23" height="19.5" rx="2" fill="#747474"/>
  <rect x="596" y="1036" width="22.5" height="20" rx="2" fill="#efefef"/>
  <rect x="596" y="1044" width="15" height="12" fill="#c4c4c4"/>
  <!-- m365 -->
  <path d="M647 1037 H660 L655 1058 H646 Q642 1058 643 1054 Z" fill="url(#m365)"/>
  <path d="M661 1042 H670 Q674 1042 673 1046 L670 1058 H657 Z" fill="#d455b8"/>
  <path d="M658 1037 H664 L661 1042 Z" fill="#1a60d0"/>
  <rect x="652" y="1056" width="21" height="8.5" rx="1" fill="#000"/>
  <text x="662.5" y="1063.5" text-anchor="middle" font-family="Liberation Sans" font-weight="bold" font-size="8" fill="#fff">M365</text>
  <!-- folder -->
  <path d="M699 1038 Q699 1037 700 1037 H707 L710 1040 H728 Q729 1040 729 1041 V1063 H699 Z" fill="#f2b82c"/>
  <rect x="699" y="1041" width="30" height="22" fill="#fbd050"/>
  <rect x="704" y="1056" width="20" height="7" rx="1.5" fill="#1f78d0"/>
  <rect x="710" y="1070" width="8" height="4" rx="2" fill="#a9a19f"/>
  <!-- edge -->
  <circle cx="768.5" cy="1050" r="15" fill="url(#edge)"/>
  <path d="M753.6 1048 A15 15 0 0 0 779 1060.5 Q767 1066 760 1057 Q755 1049 765 1046 Q758 1044 753.6 1048 Z" fill="#1a62c4"/>
  <path d="M766 1051.5 Q766.5 1047.5 771 1047.5 Q777 1048 782.5 1052 Q779 1055.5 772 1056 Q766 1056 766 1051.5 Z" fill="#2d2120"/>
  <!-- outlook -->
  <path d="M815 1044 L826 1036 L839 1044 V1063 H815 Z" fill="#1c8ee0"/>
  <path d="M815 1051 L839 1044 V1063 H815 Z" fill="#3cc6f0"/>
  <rect x="808.5" y="1041.5" width="16" height="16" rx="1.5" fill="#0f66c0"/>
  <circle cx="816.5" cy="1049.5" r="4.6" fill="none" stroke="#fff" stroke-width="2"/>
  <!-- teams -->
  <circle cx="880" cy="1038.5" r="3.5" fill="#7b83eb"/>
  <circle cx="888.5" cy="1041.5" r="3" fill="#5059c9"/>
  <path d="M885 1046 H893 V1057 Q893 1062 888 1062 Q885 1062 884 1060 Z" fill="#5059c9"/>
  <path d="M872 1045 H887 V1058 Q887 1064 880 1064 Q873 1064 872 1058 Z" fill="#7b83eb"/>
  <rect x="863.5" y="1042.5" width="15" height="15" rx="1.5" fill="#4b53bc"/>
  <text x="871" y="1055" text-anchor="middle" font-family="Liberation Sans" font-weight="bold" font-size="11" fill="#fff">T</text>
  <!-- chrome -->
  <circle cx="934" cy="1050" r="15" fill="#f2c420"/>
  <path d="M934 1050 L921 1042.5 A15 15 0 0 1 947 1042.5 Z" fill="#e33b2e"/>
  <path d="M934 1050 L921 1042.5 A15 15 0 0 0 934 1065 Z" fill="#2fa84f"/>
  <circle cx="934" cy="1050" r="6.5" fill="#fff"/>
  <circle cx="934" cy="1050" r="5.2" fill="#3a7ce8"/>
  <rect x="930" y="1070" width="8" height="4" rx="2" fill="#a9a19f"/>
  <!-- vscode -->
  <path d="M996 1035.5 L1003.5 1039 V1061 L996 1065 L982 1052 L976.5 1056.5 L973.5 1054.5 V1045.5 L976.5 1043.5 L982 1048 Z M996 1043 L987.5 1050 L996 1057 Z" fill="#1f8ad2" fill-rule="evenodd"/>
  <path d="M996 1035.5 L1003.5 1039 V1061 L996 1065 Z" fill="#32a8ee"/>
  <!-- discord -->
  <circle cx="1044" cy="1050" r="15" fill="#5865f2"/>
  <path d="M1035 1044 Q1038 1042 1041 1041.5 L1042 1043 Q1044 1042.7 1046 1043 L1047 1041.5 Q1050 1042 1053 1044 Q1056 1050 1055 1056 Q1052 1058.5 1049 1059 L1047.5 1057 Q1044 1058 1040.5 1057 L1039 1059 Q1036 1058.5 1033 1056 Q1032 1050 1035 1044 Z" fill="#fff"/>
  <circle cx="1040.5" cy="1051" r="1.8" fill="#5865f2"/><circle cx="1047.5" cy="1051" r="1.8" fill="#5865f2"/>
  <!-- lightning -->
  <rect x="1084" y="1035" width="30" height="30" fill="#5b52ee"/>
  <path d="M1101.5 1038.5 L1093.5 1048 L1102.5 1050.5 L1097 1061.5" fill="none" stroke="#fff" stroke-width="2.4" stroke-linejoin="miter"/>
  <!-- terminal -->
  <rect x="1139" y="1039" width="30" height="22.5" rx="2" fill="#3a3a3a"/>
  <path d="M1141 1039 H1149 V1042.5 H1139 V1041 A2 2 0 0 1 1141 1039 Z" fill="#c4c4c4"/>
  <rect x="1149" y="1039" width="8" height="3.5" fill="#8e8e8e"/>
  <path d="M1157 1039 H1167 A2 2 0 0 1 1169 1041 V1042.5 H1157 Z" fill="#5e5e5e"/>
  <path d="M1143.5 1046.5 L1149.5 1050.5 L1143.5 1054.5" fill="none" stroke="#cfcfcf" stroke-width="2.6"/>
  <rect x="1152.5" y="1053.8" width="10" height="2.4" fill="#e8e8e8"/>
  <rect x="1150" y="1070" width="8" height="4" rx="2" fill="#a9a19f"/>
  <!-- notion -->
  <path d="M1197.8 1039.5 L1214.5 1038 L1221 1042 V1061 L1201.5 1062.3 L1197.8 1058 Z" fill="#fff" stroke="#111" stroke-width="2"/>
  <path d="M1197.8 1039.5 L1201.5 1043 L1221 1042 M1201.5 1043 V1062.3" fill="none" stroke="#111" stroke-width="1.5"/>
  <text x="1211.3" y="1058.5" text-anchor="middle" font-family="Liberation Serif" font-weight="bold" font-size="15" fill="#000">N</text>
  <circle cx="1221" cy="1040.5" r="7.8" fill="#e05252"/>
  <text x="1221.3" y="1044" text-anchor="middle" font-family="Liberation Sans" font-weight="bold" font-size="9" fill="#fde">70</text>
  <rect x="1205" y="1070" width="8" height="4" rx="2" fill="#a9a19f"/>
  <!-- orange search -->
  <circle cx="1266.8" cy="1045.8" r="8.6" fill="none" stroke="#f58b1c" stroke-width="5"/>
  <path d="M1259.5 1053 L1252.3 1060.3" stroke="#f58b1c" stroke-width="5" stroke-linecap="round"/>
  <!-- firefox -->
  <circle cx="1319" cy="1050.5" r="14" fill="url(#ff)"/>
  <path d="M1323 1035 Q1336 1041 1333 1054 Q1331 1060 1326 1062 Q1332 1052 1327 1044 Z" fill="#ffc02a"/>
  <circle cx="1320" cy="1049" r="6.8" fill="#7b3ad6"/>
  <circle cx="1321" cy="1048" r="4" fill="#9a5ae6"/>
  <path d="M1306 1046 Q1309 1038 1316 1039 Q1311 1042 1311 1047 Z" fill="#ff8a2a"/>
  <!-- android -->
  <circle cx="1374" cy="1050" r="14.5" fill="#fbf7f5"/>
  <path d="M1374 1040 L1367 1061 M1374 1040 L1381 1061 M1366 1052 H1383" stroke="#4a86e0" stroke-width="2.6" fill="none"/>
  <circle cx="1374" cy="1041" r="2" fill="#4a86e0"/>
  <rect x="1370" y="1070" width="8" height="4" rx="2" fill="#a9a19f"/>
  <!-- jadx active -->
  <rect x="1404.5" y="1025" width="49" height="49.5" rx="4" fill="#ffffff" opacity="0.07"/>
  <g transform="translate(1417 1038) scale(1.2)">
    <defs><clipPath id="lc2"><circle cx="10" cy="10" r="9.6"/></clipPath></defs>
    <circle cx="10" cy="10" r="10.3" fill="#fff"/>
    <g clip-path="url(#lc2)">
      <rect x="0" y="0" width="20" height="20" fill="#14121c"/>
      <path d="M11 0 L20 0 L20 11 L9 11 Z" fill="#1f8c7a"/>
      <path d="M0 12.5 L20 9 L20 20 L0 20 Z" fill="#2a1478"/>
      <path d="M0 0 L9 0 L6 11 L0 11 Z" fill="#7a1826"/>
    </g>
    <path d="M0.8 11.5 L6.5 15.5 L14 4.5" stroke="#f26a24" stroke-width="3.2" fill="none"/>
    <text x="1.8" y="9.6" font-family="Liberation Sans" font-weight="bold" font-size="9" fill="#fff">JA</text>
    <text x="7.5" y="18.2" font-family="Liberation Sans" font-weight="bold" font-size="8.5" fill="#fff">DX</text>
  </g>
  <rect x="1419" y="1070" width="20" height="4" rx="2" fill="#d9a3ea"/>
  <!-- tray -->
  <path d="M1635 1053.5 L1641 1047 L1647 1053.5" fill="none" stroke="#fff" stroke-width="1.8"/>
  <text x="1673.5" y="1055.5" font-family="Liberation Sans" font-size="14.5" fill="#fff">ENG</text>
  <g fill="none" stroke="#fbeeee" stroke-width="1.7" stroke-linecap="round">
    <path d="M1726.8 1048 A13 13 0 0 1 1745.4 1048"/>
    <path d="M1729.8 1051 A8.8 8.8 0 0 1 1742.4 1051"/>
    <path d="M1732.8 1054 A4.6 4.6 0 0 1 1739.4 1054"/>
  </g>
  <circle cx="1736.1" cy="1055.8" r="1.6" fill="#fbeeee"/>
  <path d="M1757 1047.5 H1760.5 L1764.8 1043.5 V1056.5 L1760.5 1052.5 H1757 Z" fill="none" stroke="#fbeeee" stroke-width="1.5" stroke-linejoin="round"/>
  <path d="M1766.8 1047.5 A3.5 3.5 0 0 1 1766.8 1052.5" fill="none" stroke="#fbeeee" stroke-width="1.4"/>
  <path d="M1769.5 1044.5 A7.5 7.5 0 0 1 1769.5 1057.5" fill="none" stroke="#8e7a76" stroke-width="1.2"/>
  <path d="M1772.3 1042 A10.5 10.5 0 0 1 1772.3 1059" fill="none" stroke="#6e5c58" stroke-width="1.1"/>
  <rect x="1786.8" y="1044" width="16" height="12" rx="2.2" fill="none" stroke="#fbeeee" stroke-width="1.5"/>
  <rect x="1789" y="1046.2" width="11.6" height="7.6" fill="#f4ecea"/>
  <rect x="1803.2" y="1048" width="2.4" height="4" fill="#fbeeee"/>
  <path d="M1790.5 1040 L1787.2 1046.5 H1790 L1788.5 1051" fill="none" stroke="#fbeeee" stroke-width="1.4"/>
  <text x="1895" y="1045" text-anchor="end" font-family="Liberation Sans" font-size="14.5" fill="#fff">2:05 PM</text>
  <text x="1895.5" y="1065" text-anchor="end" font-family="Liberation Sans" font-size="14.5" letter-spacing="0.6" fill="#fff">8/11/2025</text>
</svg>
</body></html>
